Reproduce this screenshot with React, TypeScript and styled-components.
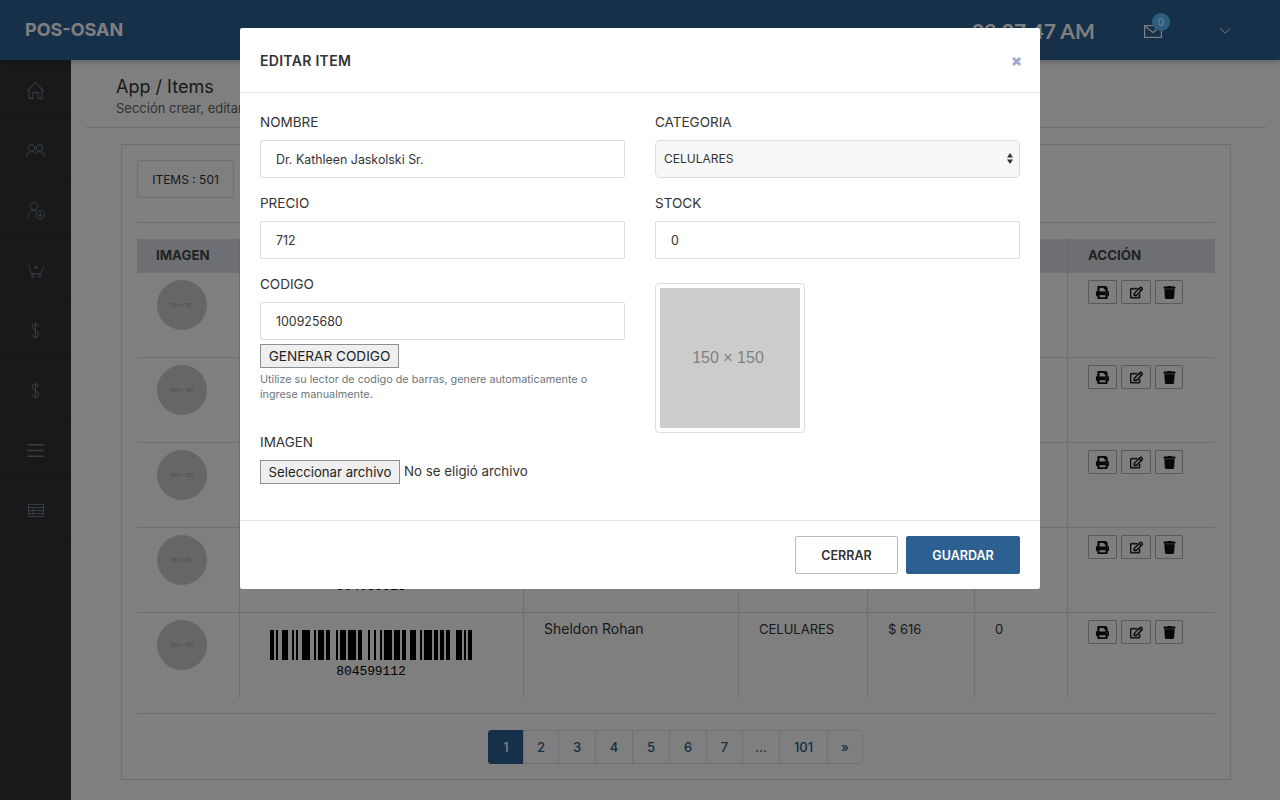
import React from "react";
import styled, {createGlobalStyle} from "styled-components";
import {SlHome, SlMenu, SlArrowDown} from "react-icons/sl";
import {TfiMoney} from "react-icons/tfi";
import {FaPrint, FaRegEdit, FaTrash} from "react-icons/fa";

const BARCODE = [
  "211232", "111242", "113123", "113141", "231212", "114131", "223211", "412121", "2331112",
];

function Barcode({code}: { code: string }) {
  let x = 0;
  const bars: Array<{ x: number, w: number }> = [];
  BARCODE.join("").split("").forEach((ch, i) => {
    const w = Number(ch) * 2;
    if (i % 2 === 0) bars.push({x, w});
    x += w;
  });
  return (
    <BarcodeBlock>
      <svg width={202} height={30}>
        {bars.map(bar => <rect key={bar.x} x={bar.x} y={0} width={bar.w} height={30} fill="#000"/>)}
      </svg>
      <BarcodeText>{code}</BarcodeText>
    </BarcodeBlock>
  );
}

function PeopleIcon() {
  return (
    <svg width={19} height={13} viewBox="0 0 19 13" fill="none" stroke="currentColor">
      <circle cx={5.5} cy={4} r={3.3}/>
      <circle cx={13.5} cy={4} r={3.3}/>
      <path d="M.5 12.5C.8 9.5 2.6 7.6 5.5 7.6c1.6 0 2.9.6 3.8 1.7M18.5 12.5c-.3-3-2.1-4.9-5-4.9-1.6 0-2.9.6-3.8 1.7"/>
    </svg>
  );
}

function UserAddIcon() {
  return (
    <svg width={18} height={18} viewBox="0 0 18 18" fill="none" stroke="currentColor">
      <circle cx={7} cy={4.2} r={3.7}/>
      <path d="M.5 15.5c.3-4 2.8-6.8 6.5-6.8 1 0 1.9.2 2.7.6"/>
      <circle cx={13.2} cy={13} r={4.3}/>
      <path d="M13.2 10.6v4.8M10.8 13h4.8"/>
    </svg>
  );
}

function BasketIcon() {
  return (
    <svg width={16} height={14} viewBox="0 0 16 14" fill="none" stroke="currentColor">
      <path d="M.5.5 3.5 9.5h9l3-6M8 1v4.5M6 3.5h4"/>
      <circle cx={5} cy={12} r={1.5}/>
      <circle cx={11.5} cy={12} r={1.5}/>
    </svg>
  );
}

function TableIcon() {
  return (
    <svg width={16} height={13} viewBox="0 0 16 13" fill="none" stroke="currentColor">
      <rect x={.5} y={.5} width={15} height={12}/>
      <path d="M.5 3.5h15M.5 6.5h15M.5 9.5h15M5 3.5v9"/>
    </svg>
  );
}

function MailIcon() {
  return (
    <svg width={18} height={13} viewBox="0 0 18 13" fill="none" stroke="currentColor" strokeWidth={1.2}>
      <rect x={.6} y={.6} width={16.8} height={11.8}/>
      <path d="M.6.8 9 7.5 17.4.8"/>
    </svg>
  );
}

const menu = [
  <SlHome/>, <PeopleIcon/>, <UserAddIcon/>, <BasketIcon/>, <TfiMoney/>, <TfiMoney/>, <SlMenu/>, <TableIcon/>,
];

const rows = [
  {code: "100925680", name: "Dr. Kathleen Jaskolski Sr.", category: "CELULARES", price: "$ 712", stock: "0"},
  {code: "", name: "", category: "", price: "", stock: ""},
  {code: "", name: "", category: "", price: "", stock: ""},
  {code: "804059523", name: "", category: "", price: "", stock: ""},
  {code: "804599112", name: "Sheldon Rohan", category: "CELULARES", price: "$ 616", stock: "0"},
];

const pages = [
  {label: "1", width: 36, active: true},
  {label: "2", width: 36},
  {label: "3", width: 38},
  {label: "4", width: 38},
  {label: "5", width: 38},
  {label: "6", width: 38},
  {label: "7", width: 37},
  {label: "...", width: 38},
  {label: "101", width: 49},
  {label: "»", width: 36},
];

function App() {
  return (
    <>
      <GlobalStyle/>
      <Page>
        <TopBar>
          <Logo>POS-OSAN</Logo>
          <TopSpacer/>
          <Clock>09:27:47 AM</Clock>
          <MailCell>
            <MailIcon/>
            <Badge>0</Badge>
          </MailCell>
          <ArrowCell><SlArrowDown/></ArrowCell>
          <EndCell/>
        </TopBar>

        <Body>
          <SideBar>
            {menu.map((icon, i) => <SideItem key={i}>{icon}</SideItem>)}
          </SideBar>

          <Main>
            <PageHead>
              <PageTitle>App / Items</PageTitle>
              <PageSub>Sección crear, editar y eliminar items</PageSub>
            </PageHead>

            <Card>
              <CountBox>ITEMS : 501</CountBox>
              <Rule/>
              <Table>
                <colgroup>
                  <col width={102}/>
                  <col width={284}/>
                  <col width={215}/>
                  <col width={129}/>
                  <col width={107}/>
                  <col width={93}/>
                  <col width={148}/>
                </colgroup>
                <thead>
                <tr>
                  <th>IMAGEN</th>
                  <th>CODIGO</th>
                  <th>NOMBRE</th>
                  <th>CATEGORIA</th>
                  <th>PRECIO</th>
                  <th>STOCK</th>
                  <th>ACCIÓN</th>
                </tr>
                </thead>
                <tbody>
                {rows.map((row, i) => <tr key={i}>
                  <td><Thumb>150 × 150</Thumb></td>
                  <td>{row.code && <Barcode code={row.code}/>}</td>
                  <td>{row.name}</td>
                  <td>{row.category}</td>
                  <td>{row.price}</td>
                  <td>{row.stock}</td>
                  <td>
                    <Actions>
                      <ActionButton $width={29}><FaPrint/></ActionButton>
                      <ActionButton $width={30}><FaRegEdit/></ActionButton>
                      <ActionButton $width={28}><FaTrash/></ActionButton>
                    </Actions>
                  </td>
                </tr>)}
                </tbody>
              </Table>
              <BottomRule/>
              <Pagination>
                {pages.map(page => <PageItem key={page.label} $width={page.width} $active={page.active}>
                  {page.label}
                </PageItem>)}
              </Pagination>
            </Card>
          </Main>
        </Body>
      </Page>

      <Backdrop/>

      <Modal>
        <ModalHead>
          <ModalTitle>EDITAR ITEM</ModalTitle>
          <CloseMark>×</CloseMark>
        </ModalHead>

        <ModalBody>
          <FormCol>
            <Group>
              <Label>NOMBRE</Label>
              <Field>Dr. Kathleen Jaskolski Sr.</Field>
            </Group>
            <Group>
              <Label>PRECIO</Label>
              <Field>712</Field>
            </Group>
            <Group>
              <Label>CODIGO</Label>
              <Field>100925680</Field>
              <GenerateButton>GENERAR CODIGO</GenerateButton>
              <Help>Utilize su lector de codigo de barras, genere automaticamente o ingrese manualmente.</Help>
            </Group>
            <Group>
              <Label>IMAGEN</Label>
              <FileRow>
                <FileButton>Seleccionar archivo</FileButton>
                <span>No se eligió archivo</span>
              </FileRow>
            </Group>
          </FormCol>

          <FormCol>
            <Group>
              <Label>CATEGORIA</Label>
              <SelectBox>
                CELULARES
                <svg width={6} height={11} viewBox="0 0 6 11">
                  <path d="M3 0 6 4.5H0zM0 6.5h6L3 11z" fill="#333"/>
                </svg>
              </SelectBox>
            </Group>
            <Group>
              <Label>STOCK</Label>
              <Field>0</Field>
            </Group>
            <Preview>
              <PreviewInner>150 × 150</PreviewInner>
            </Preview>
          </FormCol>
        </ModalBody>

        <ModalFoot>
          <FootButton $width={103}>CERRAR</FootButton>
          <FootButton $width={114} $primary>GUARDAR</FootButton>
        </ModalFoot>
      </Modal>
    </>
  );
}

const GlobalStyle = createGlobalStyle`
  html, body {
    margin: 0;
    height: 100%;
    overflow: hidden;
    background: #fff;
  }

  * {
    box-sizing: border-box;
  }

  body {
    font-family: Inter, "Liberation Sans", sans-serif;
    font-size: 13px;
    color: #333;
  }
`

const Page = styled.div`
  height: 800px;
  display: flex;
  flex-direction: column;
  overflow: hidden;
`

const TopBar = styled.header`
  height: 60px;
  flex: none;
  display: flex;
  background: #2c6094;
  color: #fff;
  box-shadow: 0 2px 6px rgba(0, 0, 0, .25);
  position: relative;
`

const Logo = styled.div`
  width: 150px;
  padding-left: 25px;
  font-size: 18px;
  font-weight: 700;
  line-height: 60px;
  border-right: 1px solid #285a8a;
`

const TopSpacer = styled.div`
  flex: 1;
`

const Clock = styled.div`
  width: 165px;
  padding-left: 19px;
  font-family: Lato, sans-serif;
  font-size: 21px;
  font-weight: 700;
  line-height: 62px;
  white-space: nowrap;
  border-left: 1px solid #285a8a;
`

const MailCell = styled.div`
  width: 71px;
  padding-top: 2px;
  display: flex;
  align-items: center;
  justify-content: center;
  position: relative;
  border-left: 1px solid #285a8a;
`

const Badge = styled.span`
  position: absolute;
  top: 13px;
  left: 34px;
  width: 18px;
  height: 18px;
  border-radius: 50%;
  background: #58bfff;
  font-size: 10px;
  line-height: 18px;
  text-align: center;
`

const ArrowCell = styled.div`
  width: 62px;
  padding: 2px 0 0 10px;
  display: flex;
  align-items: center;
  justify-content: center;
  font-size: 10px;
  border-left: 1px solid #285a8a;
`

const EndCell = styled.div`
  width: 30px;
  border-left: 1px solid #285a8a;
`

const Body = styled.div`
  flex: 1;
  display: flex;
  min-height: 0;
`

const SideBar = styled.nav`
  width: 71px;
  flex: none;
  background: #2f3336;
`

const SideItem = styled.div`
  height: 60px;
  padding-top: 2px;
  display: flex;
  align-items: center;
  justify-content: center;
  color: #737a82;
  font-size: 17px;
  border-bottom: 1px solid #2a2e31;
`

const Main = styled.main`
  flex: 1;
  padding: 0 14px 0 15px;
`

const PageHead = styled.div`
  height: 68px;
  padding-top: 16px;
  padding-left: 30px;
  border-bottom: 1px solid #ddd;
`

const PageTitle = styled.div`
  font-size: 18px;
  line-height: 22px;
`

const PageSub = styled.div`
  margin-top: 1px;
  font-size: 13px;
  line-height: 18px;
  color: #666;
`

const Card = styled.section`
  margin: 16px 35px 0;
  height: 636px;
  padding: 15px;
  border: 1px solid #ddd;
`

const CountBox = styled.div`
  width: 97px;
  height: 38px;
  display: flex;
  align-items: center;
  justify-content: center;
  font-size: 12px;
  border: 1px solid #ddd;
  border-radius: 2px;
`

const Rule = styled.div`
  margin: 24px 0 16px;
  border-top: 1px solid #ddd;
`

const BottomRule = styled.div`
  margin: 15px 0 16px;
  border-top: 1px solid #ddd;
`

const Table = styled.table`
  width: 1078px;
  table-layout: fixed;
  border-collapse: separate;
  border-spacing: 0;

  & th {
    height: 34px;
    padding: 0 0 2px 20px;
    background: #dadfe6;
    border-left: 1px solid #ccd1d8;
    font-size: 13.3px;
    font-weight: 700;
    text-align: left;
    color: #444;
    white-space: nowrap;
    overflow: hidden;
  }

  & th:first-child {
    border-left: 0;
    padding-left: 19px;
  }

  & th:nth-child(6) {
    letter-spacing: -.4px;
  }

  & td {
    height: 85px;
    padding: 7px 0 0 20px;
    vertical-align: top;
    border-left: 1px solid #ddd;
    border-bottom: 1px solid #ddd;
    font-size: 13px;
    line-height: 20px;
  }

  & td:first-child {
    border-left: 0;
    padding-left: 20px;
  }

  & tbody tr:last-child td {
    border-bottom: 0;
  }

  & td:nth-child(n + 3):nth-child(-n + 6) {
    padding-top: 6px;
  }

  & td:nth-child(3) {
    font-size: 14px;
  }

  & tbody tr td:nth-child(2) {
    padding-left: 30px;
    padding-top: 17px;
  }
`

const Thumb = styled.div`
  width: 50px;
  height: 50px;
  border-radius: 50%;
  background: #ccc;
  color: #969696;
  font-size: 5px;
  line-height: 50px;
  text-align: center;
`

const BarcodeBlock = styled.div`
  width: 202px;
  display: flex;
  flex-direction: column;
  align-items: center;
  line-height: 0;
`

const BarcodeText = styled.div`
  margin-top: 5px;
  font-family: "Liberation Mono", monospace;
  font-size: 13px;
  line-height: 14px;
  letter-spacing: -.1px;
  color: #000;
`

const Actions = styled.div`
  display: flex;
  gap: 4px;
`

const ActionButton = styled.div<{ $width: number }>`
  width: ${props => props.$width}px;
  height: 24px;
  display: flex;
  align-items: center;
  justify-content: center;
  font-size: 13px;
  color: #111;
  border: 1px solid #b4b4b4;
  border-radius: 1px;

  & svg {
    stroke: currentColor;
    stroke-width: 20px;
  }
`

const Pagination = styled.div`
  display: flex;
  justify-content: center;
`

const PageItem = styled.div<{ $width: number, $active?: boolean }>`
  width: ${props => props.$width}px;
  height: 34px;
  display: flex;
  align-items: center;
  justify-content: center;
  margin-left: -1px;
  font-size: 13px;
  font-weight: 500;
  color: ${props => props.$active ? "#fff" : "#2c5d8a"};
  background: ${props => props.$active ? "#2c6094" : "transparent"};
  border: 1px solid ${props => props.$active ? "#2c6094" : "#dee2e6"};

  &:first-child {
    border-radius: 3px 0 0 3px;
  }

  &:last-child {
    border-radius: 0 3px 3px 0;
  }
`

const Backdrop = styled.div`
  position: fixed;
  inset: 0;
  background: rgba(0, 0, 0, .5);
`

const Modal = styled.div`
  position: fixed;
  top: 28px;
  left: 240px;
  width: 800px;
  background: #fff;
  border-radius: 2px;
`

const ModalHead = styled.div`
  height: 65px;
  padding: 0 18px 0 20px;
  display: flex;
  align-items: center;
  justify-content: space-between;
  border-bottom: 1px solid #e3e3e3;
`

const ModalTitle = styled.div`
  font-size: 14px;
  font-weight: 600;
  letter-spacing: .3px;
  color: #333;
`

const CloseMark = styled.div`
  font-size: 16px;
  font-weight: 900;
  color: #a4a9d0;
`

const ModalBody = styled.div`
  display: grid;
  grid-template-columns: 365px 365px;
  gap: 30px;
  padding: 20px;
`

const FormCol = styled.div`
  display: flex;
  flex-direction: column;
`

const Group = styled.div`
  margin-bottom: 16px;
`

const Label = styled.div`
  margin-bottom: 8px;
  font-size: 13.5px;
  line-height: 19px;
  color: #333;
`

const Field = styled.div`
  height: 38px;
  padding-left: 15px;
  font-size: 12.4px;
  line-height: 38px;
  color: #333;
  border: 1px solid #ddd;
  border-radius: 2px;
`

const SelectBox = styled.div`
  height: 38px;
  padding: 0 6px 2px 8px;
  display: flex;
  align-items: center;
  justify-content: space-between;
  font-size: 12px;
  color: #333;
  background: #f8f8f8;
  border: 1px solid #ddd;
  border-radius: 5px;
`

const NativeButton = styled.div`
  height: 24px;
  padding-bottom: 1px;
  display: flex;
  align-items: center;
  justify-content: center;
  flex: none;
  color: #222;
  background: #efefef;
  border: 1px solid #8f8f8f;
`

const GenerateButton = styled(NativeButton)`
  width: 139px;
  margin-top: 4px;
  font-size: 13.6px;
`

const FileButton = styled(NativeButton)`
  width: 140px;
  font-size: 13.2px;
`

const Help = styled.div`
  margin: 4px 0 15px;
  font-size: 10.8px;
  line-height: 15px;
  color: #6c757d;
`

const FileRow = styled.div`
  display: flex;
  align-items: center;
  gap: 4px;
  font-size: 13.3px;

  & span {
    padding-bottom: 2px;
  }
`

const Preview = styled.div`
  width: 150px;
  height: 150px;
  margin-top: 8px;
  padding: 4px;
  border: 1px solid #ddd;
  border-radius: 4px;
`

const PreviewInner = styled.div`
  height: 100%;
  padding-right: 4px;
  display: flex;
  align-items: center;
  justify-content: center;
  font-family: "Liberation Sans", sans-serif;
  font-size: 16px;
  color: #808080;
  background: #ccc;
`

const ModalFoot = styled.div`
  display: flex;
  justify-content: flex-end;
  gap: 8px;
  padding: 15px 20px;
  border-top: 1px solid #e3e3e3;
`

const FootButton = styled.div<{ $width: number, $primary?: boolean }>`
  width: ${props => props.$width}px;
  height: 38px;
  display: flex;
  align-items: center;
  justify-content: center;
  font-size: 12.5px;
  font-weight: 600;
  color: ${props => props.$primary ? "#fff" : "#333"};
  background: ${props => props.$primary ? "#2c6091" : "#fff"};
  border: 1px solid ${props => props.$primary ? "#2c6091" : "#bbb"};
  border-radius: 2px;
`

export default App;
